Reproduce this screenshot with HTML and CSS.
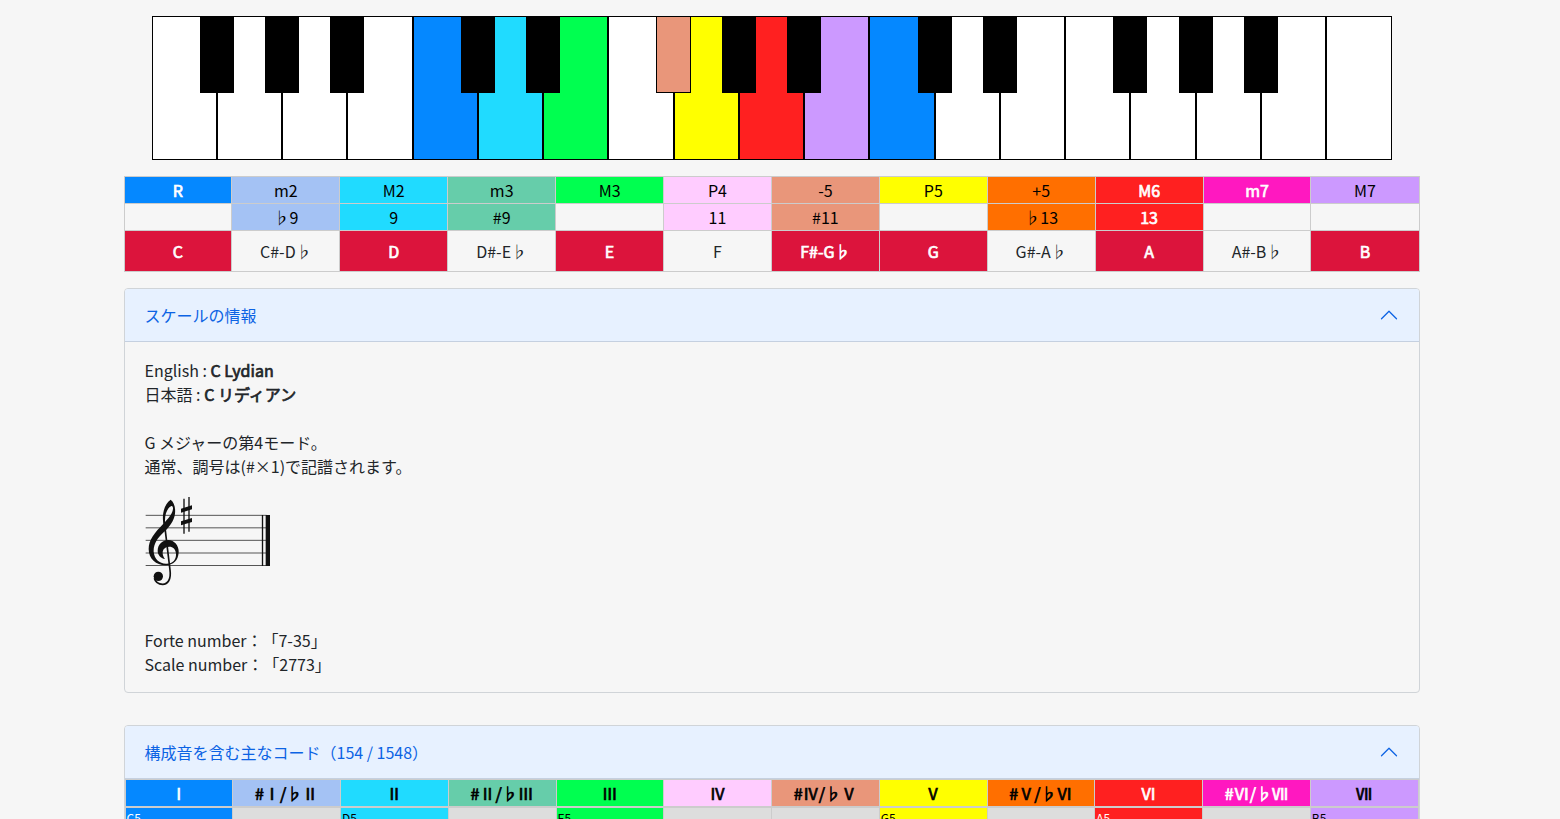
FILE: index.html
```html
<!DOCTYPE html>
<html lang="ja">
<head>
    <meta charset="UTF-8">
    <meta name="viewport" content="width=device-width, initial-scale=1">
    <title>C Lydian</title>
    <link rel="stylesheet" href="styles.css">
</head>
<body>
<div class="container">
    <div class="piano">
        <div class="key"><span class="black"></span></div>
        <div class="key"><span class="black"></span></div>
        <div class="key"><span class="black"></span></div>
        <div class="key"></div>
        <div class="key root"><span class="black"></span></div>
        <div class="key maj2"><span class="black"></span></div>
        <div class="key maj3"></div>
        <div class="key"><span class="black flat5"></span></div>
        <div class="key p5"><span class="black"></span></div>
        <div class="key maj6"><span class="black"></span></div>
        <div class="key maj7"></div>
        <div class="key root"><span class="black"></span></div>
        <div class="key"><span class="black"></span></div>
        <div class="key"></div>
        <div class="key"><span class="black"></span></div>
        <div class="key"><span class="black"></span></div>
        <div class="key"><span class="black"></span></div>
        <div class="key"></div>
        <div class="key"></div>
    </div>

    <table class="degrees">
        <tr>
            <td class="root">R</td>
            <td class="min2">m2</td>
            <td class="maj2">M2</td>
            <td class="min3">m3</td>
            <td class="maj3">M3</td>
            <td class="p4">P4</td>
            <td class="flat5">-5</td>
            <td class="p5">P5</td>
            <td class="aug5">+5</td>
            <td class="maj6">M6</td>
            <td class="min7">m7</td>
            <td class="maj7">M7</td>
        </tr>
        <tr>
            <td></td>
            <td class="min2">♭9</td>
            <td class="maj2">9</td>
            <td class="min3">#9</td>
            <td></td>
            <td class="p4">11</td>
            <td class="flat5">#11</td>
            <td></td>
            <td class="aug5">♭13</td>
            <td class="maj6">13</td>
            <td></td>
            <td></td>
        </tr>
        <tr class="notes">
            <td class="on">C</td>
            <td>C#-D♭</td>
            <td class="on">D</td>
            <td>D#-E♭</td>
            <td class="on">E</td>
            <td>F</td>
            <td class="on">F#-G♭</td>
            <td class="on">G</td>
            <td>G#-A♭</td>
            <td class="on">A</td>
            <td>A#-B♭</td>
            <td class="on">B</td>
        </tr>
    </table>

    <div class="accordion">
        <button class="accordion-button" type="button">
            <span>スケールの情報</span>
            <svg class="chevron" viewBox="0 0 16 16"><path d="M2 11l6-6 6 6"/></svg>
        </button>
        <div class="accordion-body">
            <p>English : <b>C Lydian</b><br>日本語 : <b>C リディアン</b></p>
            <p>G メジャーの第4モード。<br>通常、調号は(#×1)で記譜されます。</p>
            <svg class="score" viewBox="45 -21 378 378">
                <path class="staff" d="M47 91H410M47 128.500H410M47 166H410M47 204H410M47 241.500H410"/>
                <path class="barline" d="M397.500 90V243"/>
                <path d="M407 90h13v153h-13z"/>
                <!-- treble clef -->
                <path fill-rule="evenodd" d="M122 44C132 52 137 66 135 86C132 108 118 126 101 142C84 158 70 176 71 200C73 222 88 235 108 236C130 237 139 222 138 206C137 192 129 185 118 185C104 185 98 194 98 204C98 212 101 217 105 222C92 220 83 210 83 197C83 178 98 165 115 165C134 166 147 182 146 202C145 226 130 241 107 241C78 240 56 222 56 192C56 164 73 144 100 116C96 92 100 60 122 44ZM124 63C112 68 104 88 105 111C117 99 129 84 129 70C129 65 127 62 124 63Z"/>
                <path class="stem" d="M103 112L120 255C124 284 113 298 98 298C85 298 76 291 73 280"/>
                <circle cx="85" cy="274" r="14"/>
                <!-- sharp -->
                <path class="sharp" d="M162 41V146M177 36V140"/>
                <path d="M153 71l33-10v12l-33 10zM153 109l33-10v12l-33 10z"/>
            </svg>
            <p class="numbers">Forte number：「7-35」<br>Scale number：「2773」</p>
        </div>
    </div>

    <div class="accordion">
        <button class="accordion-button" type="button">
            <span>構成音を含む主なコード（154 / 1548）</span>
            <svg class="chevron" viewBox="0 0 16 16"><path d="M2 11l6-6 6 6"/></svg>
        </button>
        <table class="chords">
            <thead>
            <tr>
                <th class="root">Ⅰ</th>
                <th class="min2">#Ⅰ/♭Ⅱ</th>
                <th class="maj2">Ⅱ</th>
                <th class="min3">#Ⅱ/♭Ⅲ</th>
                <th class="maj3">Ⅲ</th>
                <th class="p4">Ⅳ</th>
                <th class="flat5">#Ⅳ/♭Ⅴ</th>
                <th class="p5">Ⅴ</th>
                <th class="aug5">#Ⅴ/♭Ⅵ</th>
                <th class="maj6">Ⅵ</th>
                <th class="min7">#Ⅵ/♭Ⅶ</th>
                <th class="maj7">Ⅶ</th>
            </tr>
            </thead>
            <tbody>
            <tr>
                <td class="root">C5</td>
                <td></td>
                <td class="maj2">D5</td>
                <td></td>
                <td class="maj3">E5</td>
                <td></td>
                <td></td>
                <td class="p5">G5</td>
                <td></td>
                <td class="maj6">A5</td>
                <td></td>
                <td class="maj7">B5</td>
            </tr>
            </tbody>
        </table>
    </div>
</div>
</body>
</html>
```
FILE: styles.css
```css
* {
    box-sizing: border-box;
}

body {
    margin: 0;
    padding-right: 17px;
    background: #f6f6f6;
    color: #212529;
    font-family: "Noto Sans CJK JP", sans-serif;
    font-size: 16px;
    line-height: 24px;
    text-spacing-trim: space-all;
}

.container {
    max-width: 1320px;
    margin: 0 auto;
    padding: 16px 12px;
}

/* keyboard */
.piano {
    display: flex;
    height: 144px;
    margin: 0 28px 16px;
}

.key {
    position: relative;
    flex: 1;
    border: 1px solid #000;
    background: #fff;
}

.black {
    position: absolute;
    z-index: 1;
    top: -1px;
    right: -18px;
    width: 54%;
    height: 77px;
    border: 1px solid #000;
    background: #000;
}

/* tables */
table {
    width: 100%;
    table-layout: fixed;
    border-collapse: collapse;
}

.degrees {
    margin-bottom: 16px;
    text-align: center;
}

.degrees td {
    height: 27px;
    padding: 1px;
    border: 1px solid #ccc;
}

.degrees .notes td {
    height: 41px;
}

.degrees .on {
    background: #dc143c;
    color: #fff;
}

.chords th {
    height: 27px;
    padding: 1px;
    border: 1px solid #ccc;
    border-bottom: 2px solid #ccc;
    font-family: "Noto Sans CJK SC", "Noto Sans CJK JP", sans-serif;
}

.chords td {
    height: 27px;
    padding: 1px;
    border: 1px solid #ccc;
    background: #ddd;
    font-size: 12px;
    line-height: 18px;
    vertical-align: top;
}

/* degree colours */
.root, .chords .root { background: #0588ff; color: #fff; }
.min2, .chords .min2 { background: #a4c2f4; color: #000; }
.maj2, .chords .maj2 { background: #20dbff; color: #000; }
.min3, .chords .min3 { background: #66cdaa; color: #000; }
.maj3, .chords .maj3 { background: #00ff50; color: #000; }
.p4, .chords .p4 { background: #ffccff; color: #000; }
.flat5, .chords .flat5 { background: #e9967a; color: #000; }
.p5, .chords .p5 { background: #ffff00; color: #000; }
.aug5, .chords .aug5 { background: #ff6f00; color: #000; }
.maj6, .chords .maj6 { background: #ff2020; color: #fff; }
.min7, .chords .min7 { background: #ff18c0; color: #fff; }
.maj7, .chords .maj7 { background: #cc99ff; color: #000; }

/* bold text keeps the regular letter widths */
b, .chords th, .degrees .on,
.degrees .root, .degrees .maj6, .degrees .min7 {
    font-weight: normal;
    -webkit-text-stroke: 0.7px currentColor;
}

/* accordion */
.accordion {
    margin-bottom: 32px;
    border: 1px solid #d0d4d8;
    border-radius: 4px;
}

.accordion-button {
    display: flex;
    align-items: center;
    justify-content: space-between;
    width: 100%;
    height: 53px;
    padding: 0 20px;
    border: 0;
    border-bottom: 1px solid #c5d0e0;
    border-radius: 3px 3px 0 0;
    background: #e7f1ff;
    color: #0c63e4;
    font: inherit;
    text-align: left;
}

.chevron {
    width: 20px;
    height: 20px;
    fill: none;
    stroke: #0c63e4;
    stroke-linecap: round;
    stroke-linejoin: round;
}

.accordion-body {
    padding: 16px 20px;
}

.accordion-body p {
    margin: 0 0 24px;
}

.accordion-body .numbers {
    margin: 0;
}

.score {
    display: block;
    width: 126px;
    height: 126px;
    margin: -24px 0 24px;
    fill: #111;
}

.staff {
    stroke: #555;
    stroke-width: 3;
}

.barline, .sharp {
    stroke: #111;
    stroke-width: 4;
}

.stem {
    fill: none;
    stroke: #111;
    stroke-width: 5;
}
```
